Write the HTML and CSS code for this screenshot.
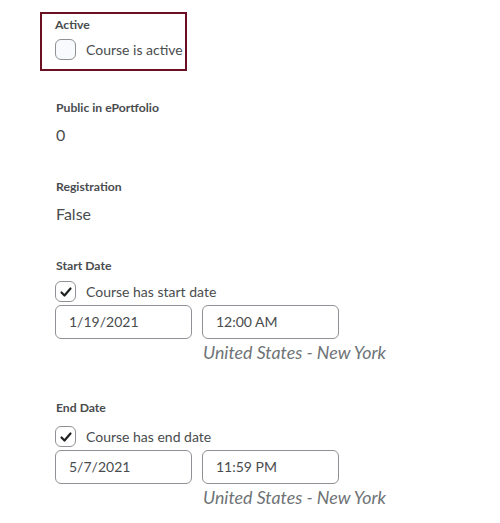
FILE: index.html
```html
<!DOCTYPE html>
<html lang="en">
<head>
    <meta charset="UTF-8">
    <title>Course Offering Information</title>
    <link rel="stylesheet" href="styles.css">
</head>
<body>

<div class="form">
    <div class="field highlight">
        <div class="label">Active</div>
        <label class="check">
            <span class="box"></span>
            Course is active
        </label>
    </div>

    <div class="field plain first">
        <div class="label">Public in ePortfolio</div>
        <div class="value">0</div>
    </div>

    <div class="field plain">
        <div class="label">Registration</div>
        <div class="value">False</div>
    </div>

    <div class="field plain dates">
        <div class="label">Start Date</div>
        <label class="check">
            <span class="box checked">
                <svg width="14" height="14" viewBox="0 0 14 14"><path d="M2.5 7.5 L5.5 10.5 L11.5 3.5" fill="none" stroke="#202122" stroke-width="2.2" stroke-linecap="round" stroke-linejoin="round"/></svg>
            </span>
            Course has start date
        </label>
        <div class="inputs">
            <div class="input">1/19/2021</div>
            <div class="input">12:00 AM</div>
        </div>
        <div class="tz">United States - New York</div>
    </div>

    <div class="field plain dates end">
        <div class="label">End Date</div>
        <label class="check">
            <span class="box checked">
                <svg width="14" height="14" viewBox="0 0 14 14"><path d="M2.5 7.5 L5.5 10.5 L11.5 3.5" fill="none" stroke="#202122" stroke-width="2.2" stroke-linecap="round" stroke-linejoin="round"/></svg>
            </span>
            Course has end date
        </label>
        <div class="inputs">
            <div class="input">5/7/2021</div>
            <div class="input">11:59 PM</div>
        </div>
        <div class="tz">United States - New York</div>
    </div>
</div>

</body>
</html>
```

FILE: styles.css
```css
* {
    margin: 0;
    padding: 0;
    box-sizing: border-box;
}

body {
    font-family: 'Lato', 'Liberation Sans', sans-serif;
    background-color: #fff;
    color: #494c4e;
}

.form {
    padding: 12px 0 0 40px;
}

.field {
    display: flex;
    flex-direction: column;
    align-items: flex-start;
}

.highlight {
    width: 147px;
    border: 2px solid #6b1022;
    padding: 3px 0 9px 13px;
    white-space: nowrap;
}

.plain {
    padding-left: 16px;
    margin-top: 32px;
}

.plain.first {
    margin-top: 29px;
}

.label {
    font-size: 12.2px;
    font-weight: 700;
    line-height: 16px;
    color: #494c4e;
}

.value {
    font-size: 16px;
    line-height: 24px;
    margin-top: 7px;
    color: #494c4e;
}

.check {
    display: flex;
    align-items: center;
    gap: 10px;
    margin-top: 6px;
    font-size: 14px;
    line-height: 21px;
    white-space: nowrap;
    color: #494c4e;
}

.box {
    width: 21px;
    height: 21px;
    border: 1px solid #8e9195;
    border-radius: 6px;
    background-color: #f8fafd;
    display: flex;
    align-items: center;
    justify-content: center;
}

.plain .box {
    margin-left: -1px;
}

.box.checked {
    background-color: #fff;
}

.dates .check {
    margin-top: 7px;
}

.dates.end {
    margin-top: 38px;
}

.dates.end .check {
    margin-top: 10px;
}

.inputs {
    display: flex;
    gap: 10px;
    margin-top: 3px;
    margin-left: -1px;
}

.input {
    width: 137px;
    height: 34px;
    border: 1px solid #8e9195;
    border-radius: 6px;
    padding-left: 13px;
    font-size: 14px;
    line-height: 32px;
    color: #494c4e;
}

.tz {
    margin: 3px 0 0 147px;
    font-size: 17.8px;
    font-style: italic;
    line-height: 20px;
    white-space: nowrap;
    color: #6e7376;
}
```
